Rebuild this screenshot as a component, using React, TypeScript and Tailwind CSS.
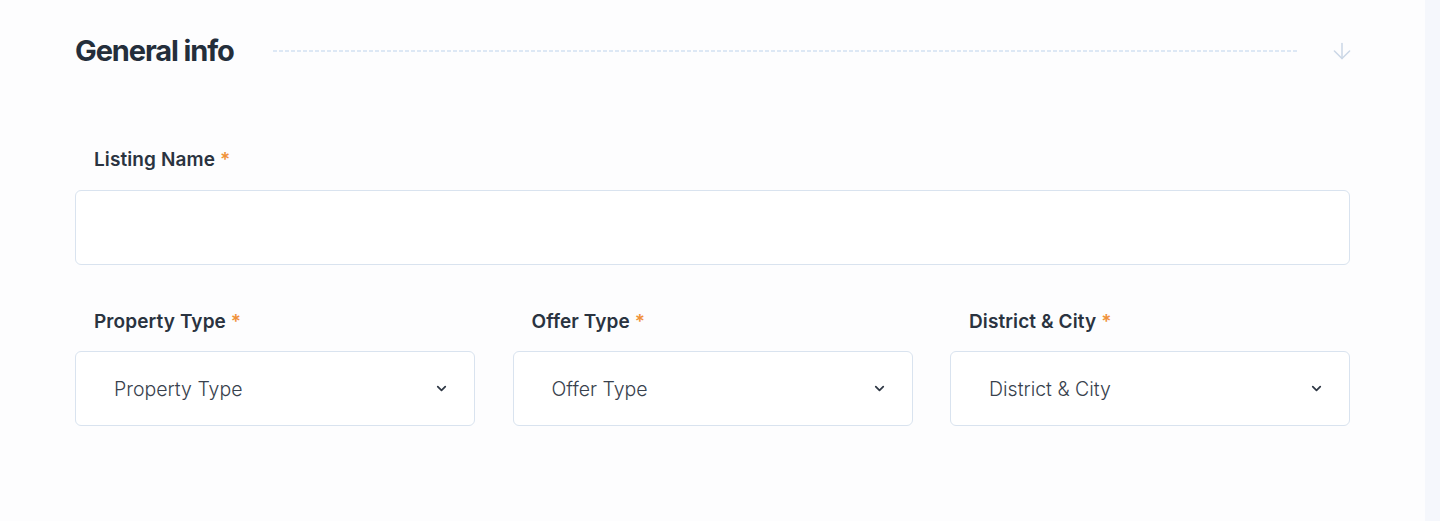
import { ArrowDown, ChevronDown } from 'lucide-react';

const selects = ['Property Type', 'Offer Type', 'District & City'];

function Label({ text }: { text: string }) {
  return (
    <label className="block pl-[19px] text-[19px] leading-[24px] font-semibold tracking-[0.1px] text-[#2a3340]">
      {text} <span className="text-[#f0923a]">*</span>
    </label>
  );
}

function SelectBox({ placeholder }: { placeholder: string }) {
  return (
    <div className="flex flex-col">
      <Label text={placeholder} />
      <button
        type="button"
        className="mt-[17px] flex h-[75px] w-full items-center justify-between rounded-[6px] border border-[#d9e3ef] bg-white pl-[38px] pr-[25px] pt-[3px] text-left"
      >
        <span className="text-[19.5px] font-light text-[#38414d]">{placeholder}</span>
        <ChevronDown size={15} strokeWidth={2.8} className="-mt-[3px] text-[#2f3845]" />
      </button>
    </div>
  );
}

export default function App() {
  return (
    <div
      className="flex h-[521px] w-full bg-[#fdfdfe]"
      style={{ fontFamily: 'Inter, "Noto Sans", sans-serif' }}
    >
      <main className="flex-1 pl-[75px] pt-[36px]">
        <div className="w-[1275px]">
          <div className="flex h-[30px] items-center">
            <h2 className="text-[29px] leading-[30px] font-bold tracking-[-1.1px] text-[#242e3b]">General info</h2>
            <div className="ml-[39px] h-[2px] w-[1026px] bg-[repeating-linear-gradient(90deg,#dde8f5_0_4px,transparent_4px_6px)]" />
            <ArrowDown size={26} strokeWidth={1.4} className="ml-auto mr-[-5px] text-[#cbd7e6]" />
          </div>

          <div className="mt-[82px]">
            <Label text="Listing Name" />
            <input
              type="text"
              className="mt-[18px] block h-[75px] w-full rounded-[6px] border border-[#d9e3ef] bg-white px-[38px] text-[19px] outline-none"
            />
          </div>

          <div className="mt-[45px] grid grid-cols-3 gap-x-[37.5px]">
            {selects.map((s) => (
              <SelectBox key={s} placeholder={s} />
            ))}
          </div>
        </div>
      </main>
      <aside className="w-[15px] bg-[#f5f7fc]" />
    </div>
  );
}
